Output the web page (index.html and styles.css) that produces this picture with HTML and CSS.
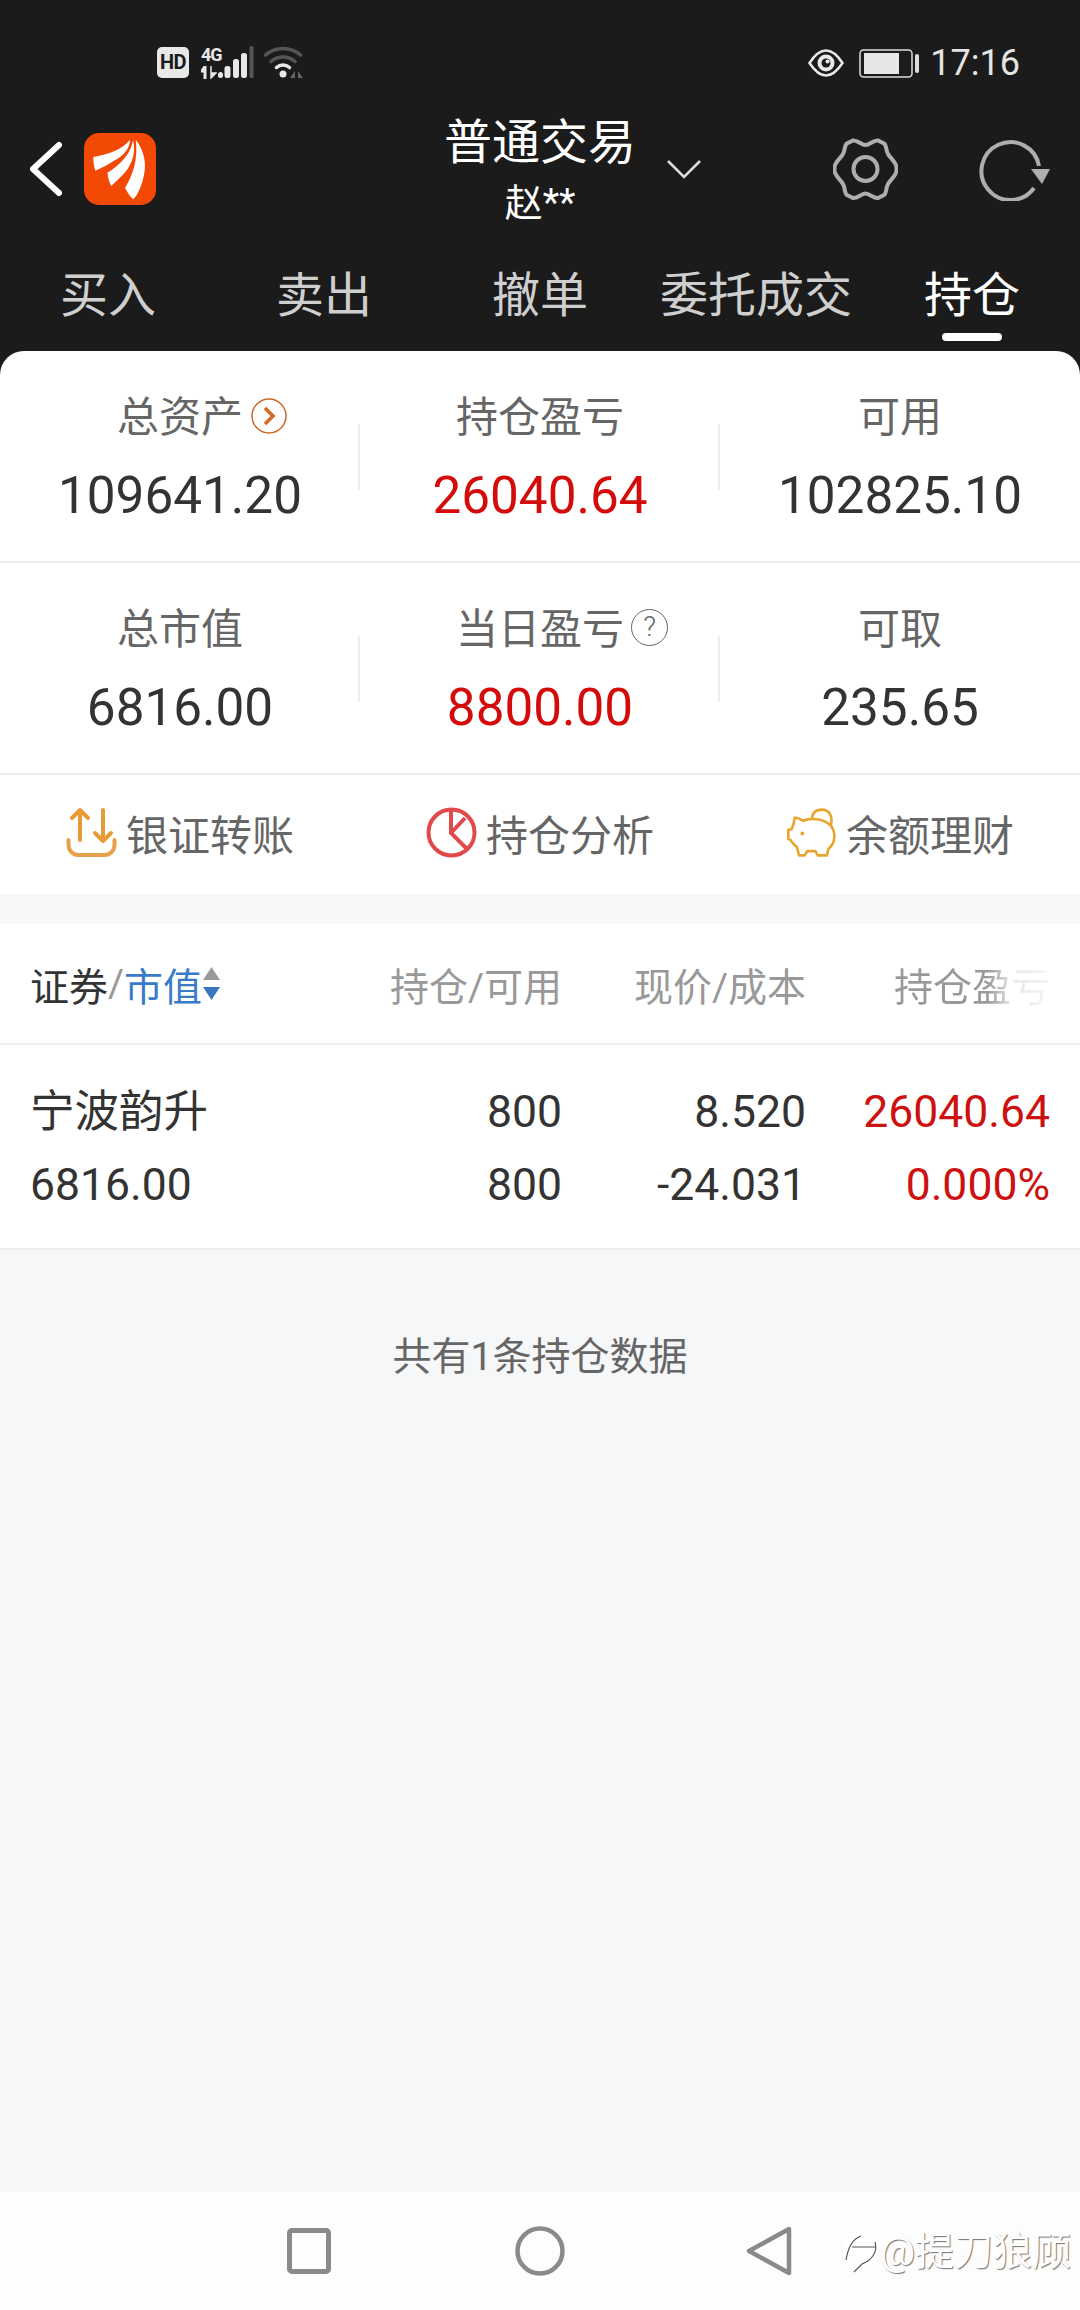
FILE: index.html
```html
<!DOCTYPE html>
<html lang="zh-CN">
<head>
<meta charset="utf-8">
<title>普通交易</title>
<link rel="stylesheet" href="styles.css">
</head>
<body>
<div class="app">
  <header class="header">
    <div class="status">
      <div class="status-left">
        <span class="hd">HD</span>
        <span class="net">
          <span class="net-label">4G</span>
          <svg class="net-arrows" viewBox="0 0 16 13"><path d="M4 13V3M1 5L4 0.5 4 5Z" stroke="#e8e8e8" stroke-width="3" fill="#e8e8e8"/><path d="M10 0V12L15 7H10" fill="#e8e8e8" stroke="#e8e8e8" stroke-width="1.5"/></svg>
        </span>
        <svg class="bars" viewBox="0 0 38 33"><rect x="1" y="26" width="5" height="6" rx="2.5" fill="#e8e8e8"/><rect x="7.5" y="20" width="6" height="12" rx="2.5" fill="#e8e8e8"/><rect x="16" y="13" width="6" height="19" rx="2.5" fill="#e8e8e8"/><rect x="24" y="7" width="6" height="25" rx="2.5" fill="#e8e8e8"/><rect x="32.5" y="0" width="4" height="32" rx="1.5" fill="#555"/></svg>
        <svg class="wifi" viewBox="0 0 40 32"><g fill="none" stroke-linecap="round"><path d="M1.5 9A27 27 0 0 1 36.5 9" stroke="#555" stroke-width="3.5"/><path d="M7 15.500A18 18 0 0 1 31 15.500" stroke="#555" stroke-width="3.500"/><path d="M12.500 21.500A10 10 0 0 1 25.500 21.500" stroke="#e8e8e8" stroke-width="3.500"/></g><circle cx="19" cy="28" r="3.500" fill="#e8e8e8"/><path d="M31 25V32H26ZM34 25L39 32H34Z" fill="#666"/></svg>
      </div>
      <div class="status-right">
        <svg class="eye" viewBox="0 0 36 28"><path d="M1.500 14C8 4 14 1.500 18 1.500S28 4 34.500 14C28 24 22 26.500 18 26.500S8 24 1.500 14Z" fill="none" stroke="#e8e8e8" stroke-width="2.500"/><circle cx="18" cy="14" r="8.500" fill="#e8e8e8"/><circle cx="18" cy="14" r="4.500" fill="#1b1b1b"/><circle cx="19.500" cy="12.500" r="2" fill="#e8e8e8"/></svg>
        <svg class="battery" viewBox="0 0 60 29"><rect x="1" y="1" width="52" height="27" rx="3.500" fill="none" stroke="#ddd" stroke-width="1.500"/><rect x="5" y="4" width="35" height="21" fill="#e6e6e6"/><rect x="56" y="5" width="4" height="19" rx="2" fill="#ddd"/></svg>
        <span class="time">17:16</span>
      </div>
    </div>
    <div class="nav">
      <div class="nav-left">
        <svg class="back" viewBox="0 0 36 56"><path d="M31 4L5 28 31 52" fill="none" stroke="#fff" stroke-width="6" stroke-linecap="round" stroke-linejoin="round"/></svg>
        <svg class="logo" viewBox="42 40 217 217"><rect x="42" y="40" width="217" height="217" rx="46" fill="#f24a05"/><g fill="#fff"><path d="M70 112C110 105 160 90 180 60C182 85 160 110 130 125C115 135 95 145 76 154C72 140 70 125 70 112Z"/><path d="M113 160C150 135 180 110 190 62C198 95 190 130 165 160C150 175 135 190 124 200C118 188 114 175 113 160Z"/><path d="M166 205C190 165 205 120 198 60C222 90 232 130 222 170C215 200 205 225 190 240C180 230 172 218 166 205Z"/></g></svg>
      </div>
      <div class="nav-title">
        <div class="title">普通交易</div>
        <div class="subtitle">赵**</div>
      </div>
      <div class="nav-right">
        <svg class="caret" viewBox="0 0 36 20"><path d="M2 2L18 18 34 2" fill="none" stroke="#ddd" stroke-width="2.500"/></svg>
        <svg class="gear" viewBox="0 0 65 63"><path d="M32.500 7C37 7 40 2 45 2.500L51 5.500C54 7.500 52.500 12 55 16C57 20 63 24 63.500 29V33C63 38 57 42 55 46C52.500 50 54 55 51 57L45 60C40 60.500 37 55.500 32.500 55.500C28 55.500 25 60.500 20 60L14 57C11 55 12.500 50 10 46C8 42 2 38 1.500 33V29C2 24 8 20 10 16C12.500 12 11 7.500 14 5.500L20 2.500C25 2 28 7 32.500 7Z" fill="none" stroke="#aeaeae" stroke-width="4"/><circle cx="32.500" cy="31" r="12" fill="none" stroke="#aeaeae" stroke-width="4"/></svg>
        <svg class="refresh" viewBox="0 0 71 63"><path d="M55 50A29 29 0 1 1 60 28" fill="none" stroke="#aeaeae" stroke-width="4"/><path d="M52 31H71L63 46Z" fill="#aeaeae"/></svg>
      </div>
    </div>
    <nav class="tabs">
      <div class="tab">买入</div>
      <div class="tab">卖出</div>
      <div class="tab">撤单</div>
      <div class="tab">委托成交</div>
      <div class="tab tab-active">持仓</div>
    </nav>
  </header>

  <section class="card">
    <div class="stats">
      <div class="stat">
        <div class="stat-label"><span class="label-wrap">总资产<svg class="badge-more" viewBox="0 0 36 36"><circle cx="18" cy="18" r="17" fill="none" stroke="#c8692c" stroke-width="1.500"/><path d="M14 10L22 18 14 26" fill="none" stroke="#d2691e" stroke-width="3.500"/></svg></span></div>
        <div class="stat-value">109641.20</div>
      </div>
      <div class="divider"></div>
      <div class="stat">
        <div class="stat-label">持仓盈亏</div>
        <div class="stat-value up">26040.64</div>
      </div>
      <div class="divider"></div>
      <div class="stat">
        <div class="stat-label">可用</div>
        <div class="stat-value">102825.10</div>
      </div>
    </div>
    <div class="stats">
      <div class="stat">
        <div class="stat-label">总市值</div>
        <div class="stat-value">6816.00</div>
      </div>
      <div class="divider"></div>
      <div class="stat">
        <div class="stat-label"><span class="label-wrap">当日盈亏<span class="badge-help">?</span></span></div>
        <div class="stat-value up">8800.00</div>
      </div>
      <div class="divider"></div>
      <div class="stat">
        <div class="stat-label">可取</div>
        <div class="stat-value">235.65</div>
      </div>
    </div>
    <div class="actions">
      <div class="action">
        <svg class="action-icon" viewBox="0 0 51 51"><g fill="none" stroke="#e89b35" stroke-width="4" stroke-linecap="round" stroke-linejoin="round"><path d="M2.500 33V38A10 10 0 0 0 12.500 48H38.500A10 10 0 0 0 48.500 38V33" stroke="#e6a24a"/><path d="M14 33V3M6 11L14 3 22 11"/><path d="M37 3V34M29 26L37 34 45 26"/></g></svg>
        <span>银证转账</span>
      </div>
      <div class="action">
        <svg class="action-icon" viewBox="0 0 51 51"><g fill="none" stroke="#e04a4a" stroke-width="4"><circle cx="25.500" cy="25.500" r="23"/><path d="M25 3V26L42 43M25 26L39 11"/></g></svg>
        <span>持仓分析</span>
      </div>
      <div class="action">
        <svg class="action-icon" viewBox="75 50 156 156"><g fill="none" stroke="#e8a52e" stroke-width="8" stroke-linejoin="round" stroke-linecap="round"><path d="M102 82C112 82 120 88 128 92C150 82 190 85 210 105C228 125 228 160 205 178L200 198H172L165 185H140L132 198H115L108 172C98 165 92 155 88 150L82 148V120L92 118C97 108 100 100 102 82Z"/><path d="M155 80C158 65 170 58 185 58C205 58 218 75 213 104"/></g><circle cx="125" cy="131" r="6" fill="#e8a52e"/></svg>
        <span>余额理财</span>
      </div>
    </div>
  </section>

  <section class="holdings">
    <div class="table-row table-head">
      <div class="head-first">
        <span class="head-name">证券</span><span class="head-slash">/</span><span class="head-sort">市值</span>
        <svg class="sort" viewBox="0 0 17 33"><path d="M8.500 0L17 13H0Z" fill="#9a9a9a"/><path d="M0 20H17L8.500 33Z" fill="#3a76c0"/></svg>
      </div>
      <div class="cell-num">持仓/可用</div>
      <div class="cell-num">现价/成本</div>
      <div class="cell-num"><span class="head-fade">持仓盈亏</span></div>
    </div>
    <div class="table-row table-body">
      <div class="cell-text">
        <div class="line">宁波韵升</div>
        <div class="line">6816.00</div>
      </div>
      <div class="cell-num">
        <div class="line">800</div>
        <div class="line">800</div>
      </div>
      <div class="cell-num">
        <div class="line">8.520</div>
        <div class="line">-24.031</div>
      </div>
      <div class="cell-num profit">
        <div class="line">26040.64</div>
        <div class="line">0.000%</div>
      </div>
    </div>
  </section>

  <main class="footer-area">
    <p class="count">共有1条持仓数据</p>
  </main>

  <footer class="sysnav">
    <svg class="sys-icon" viewBox="0 0 50 50"><rect x="5.500" y="4.500" width="39" height="41" rx="2.500" fill="none" stroke="#8a8a8a" stroke-width="5"/></svg>
    <svg class="sys-icon" viewBox="0 0 50 50"><circle cx="25" cy="25" r="22.500" fill="none" stroke="#8a8a8a" stroke-width="4.500"/></svg>
    <svg class="sys-icon" viewBox="0 0 50 50"><path d="M43 3L3 25 43 47Z" fill="none" stroke="#8a8a8a" stroke-width="4.500" stroke-linejoin="round"/></svg>
    <div class="watermark">
      <svg class="wm-logo" viewBox="0 0 38 44"><circle cx="19" cy="18" r="18" fill="#fff"/><path d="M4 30C6 18 10 9 19 6M10 17H34M33 12C36 22 30 30 20 34L12 42" fill="none" stroke="#555" stroke-width="1.200"/></svg>
      <span>@提刀狼顾</span>
    </div>
  </footer>
</div>
</body>
</html>
```
FILE: styles.css
```css
* { box-sizing: border-box; }
html, body { margin: 0; padding: 0; }
body {
  width: 1080px;
  height: 2310px;
  overflow: hidden;
  font-family: Roboto, "Noto Sans CJK SC", sans-serif;
  background: #f6f7f9;
}
svg { display: block; flex: none; }
.app { display: flex; flex-direction: column; height: 2310px; }

.header { background: #1b1b1b; padding-bottom: 34px; }

.status {
  height: 100px;
  padding: 26px 60px 0 157px;
  display: flex;
  justify-content: space-between;
  align-items: center;
}
.status-left, .status-right { display: flex; align-items: center; }
.hd {
  width: 32px;
  height: 31px;
  margin-top: -1px;
  border-radius: 5px;
  background: #e8e8e8;
  color: #1b1b1b;
  font-size: 20px;
  font-weight: 700;
  line-height: 31px;
  text-align: center;
  letter-spacing: -0.5px;
}
.net { width: 16px; margin-left: 12px; margin-top: -2px; display: flex; flex-direction: column; height: 32px; }
.net-label {
  font-size: 18px;
  font-weight: 700;
  color: #e8e8e8;
  line-height: 17px;
  letter-spacing: -1px;
  white-space: nowrap;
}
.net-arrows { width: 16px; height: 13px; margin-top: 3px; }
.bars { width: 38px; height: 33px; margin-top: -2px; }
.wifi { width: 40px; height: 32px; margin-left: 9px; margin-top: -2px; }
.eye { width: 36px; height: 28px; }
.battery { width: 60px; height: 29px; margin-left: 15px; }
.time { font-size: 36px; color: #e4e4e4; margin-left: 11px; line-height: 40px; }

.nav { display: grid; grid-template-columns: 1fr 192px 1fr; height: 133px; }
.nav-left { display: flex; align-items: center; height: 72px; margin-top: 33px; padding-left: 28px; }
.back { width: 36px; height: 56px; }
.logo { width: 72px; height: 72px; margin-left: 20px; }
.nav-title { text-align: center; padding-top: 13px; }
.title { font-size: 48px; line-height: 60px; color: #fff; }
.subtitle { font-size: 38px; line-height: 60px; color: #fff; white-space: nowrap; }
.nav-right { display: flex; align-items: center; height: 72px; margin-top: 33px; }
.caret { width: 36px; height: 20px; margin-left: 30px; }
.gear { width: 65px; height: 63px; margin-left: 131px; }
.refresh { width: 71px; height: 63px; margin-left: 81px; }

.tabs { display: grid; grid-template-columns: repeat(5, 216px); padding-top: 33px; }
.tab {
  font-size: 48px;
  line-height: 60px;
  color: #cfcfcf;
  text-align: center;
  white-space: nowrap;
  height: 75px;
}
.tab-active { color: #fff; }
.tab-active::after {
  content: "";
  display: block;
  width: 60px;
  height: 8px;
  margin: 7px auto 0;
  border-radius: 4px;
  background: #fff;
}

.card {
  margin-top: -24px;
  background: #fff;
  border-radius: 24px 24px 0 0;
}
.stats {
  height: 212px;
  display: flex;
  border-bottom: 2px solid #eeeeee;
}
.stat { flex: 1; text-align: center; padding-top: 37px; }
.divider {
  flex: 0 0 2px;
  margin: 73px 0 0 -2px;
  height: 66px;
  background: #eeeeee;
}
.stat-label { font-size: 42px; line-height: 60px; color: #666; }
.label-wrap { position: relative; display: inline-block; }
.badge-more {
  position: absolute;
  left: calc(100% + 8px);
  top: 10px;
  width: 36px;
  height: 36px;
}
.badge-help {
  position: absolute;
  left: calc(100% + 7px);
  top: 9px;
  width: 37px;
  height: 37px;
  border: 1.5px solid #666;
  border-radius: 50%;
  font-size: 28px;
  font-weight: 300;
  line-height: 34px;
  text-align: center;
  color: #666;
}
.stat-value { font-size: 51.25px; line-height: 70px; margin-top: 13px; color: #333; white-space: nowrap; }
.up { color: #d40b0b; }

.actions { height: 119px; padding-bottom: 4px; display: grid; grid-template-columns: repeat(3, 360px); }
.action {
  display: flex;
  align-items: center;
  justify-content: center;
  gap: 9px;
  font-size: 42px;
  color: #666;
}
.action-icon { width: 51px; height: 51px; }

.holdings { margin-top: 30px; background: #fff; }
.table-row {
  display: grid;
  grid-template-columns: 302px 230px 244px 244px;
  padding: 0 30px;
  border-bottom: 2px solid #eeeeee;
}
.table-head { height: 121px; align-items: center; font-size: 39px; color: #999; }
.head-first { display: flex; align-items: center; white-space: nowrap; }
.head-name { color: #333; }
.head-slash { color: #999; }
.head-sort { color: #3a7bc8; }
.sort { width: 17px; height: 33px; margin-left: 1px; }
.head-fade {
  background: linear-gradient(90deg, #999 0, #999 60%, #e8e8e8 76%, #f4f4f4 100%);
  -webkit-background-clip: text;
  background-clip: text;
  color: transparent;
}
.table-body { height: 205px; padding-top: 31px; font-size: 44.5px; color: #333; }
.line { line-height: 73px; white-space: nowrap; }
.cell-num { text-align: right; white-space: nowrap; }
.profit { color: #cc1111; }

.footer-area { flex: 1; background: #f6f7f9; }
.count { margin: 0; padding-top: 77px; font-size: 39px; line-height: 60px; text-align: center; color: #666; }

.sysnav {
  position: relative;
  height: 118px;
  background: #fdfdfd;
  display: flex;
  align-items: center;
  gap: 181px;
  padding-left: 284px;
}
.sys-icon { width: 50px; height: 50px; }
.watermark {
  position: absolute;
  left: 842px;
  top: 38px;
  display: flex;
  align-items: center;
  font-size: 39px;
  line-height: 44px;
  color: #fff;
  text-shadow: 1px 1px 1px rgba(0, 0, 0, 0.55);
  white-space: nowrap;
}
.wm-logo { width: 38px; height: 44px; }
```
